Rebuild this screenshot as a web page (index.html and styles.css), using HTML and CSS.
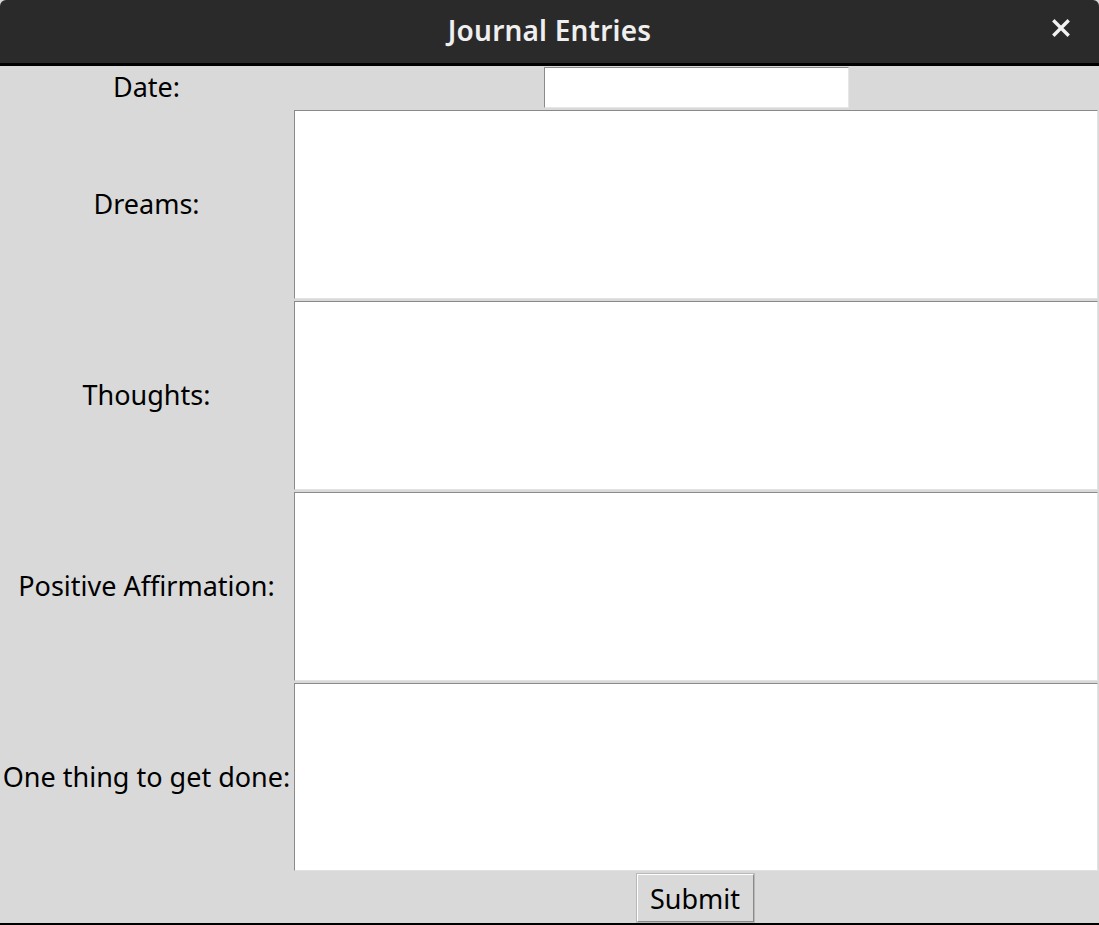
FILE: index.html
```html
<!DOCTYPE html>
<html lang="en">
<head>
<meta charset="utf-8">
<title>Journal Entries</title>
<link rel="stylesheet" href="styles.css">
</head>
<body>
<div class="window">
  <header class="titlebar">
    <span class="title">Journal Entries</span>
    <span class="close" aria-label="Close">
      <svg width="18" height="18" viewBox="0 0 18 18"><path d="M2.5 2.5 L15.5 15.5 M15.5 2.5 L2.5 15.5" stroke="#f2f2f2" stroke-width="3.4" stroke-linecap="square"/></svg>
    </span>
  </header>
  <main class="form">
    <div class="label row-date">Date:</div>
    <div class="cell-date"><input class="entry" type="text"></div>

    <div class="label">Dreams:</div>
    <div class="cell-text"><textarea class="text"></textarea></div>

    <div class="label">Thoughts:</div>
    <div class="cell-text"><textarea class="text"></textarea></div>

    <div class="label">Positive Affirmation:</div>
    <div class="cell-text"><textarea class="text"></textarea></div>

    <div class="label">One thing to get done:</div>
    <div class="cell-text"><textarea class="text"></textarea></div>

    <div class="spacer"></div>
    <div class="cell-submit"><button class="submit" type="button">Submit</button></div>
  </main>
</div>
</body>
</html>
```
FILE: styles.css
```css
html, body {
  margin: 0;
  padding: 0;
  background: #d9d9d9;
}

.window {
  width: 1099px;
  height: 925px;
  display: flex;
  flex-direction: column;
  background: #d9d9d9;
  border-bottom: 2px solid #000;
  box-sizing: border-box;
  font-family: "Noto Sans", "DejaVu Sans", sans-serif;
  overflow: hidden;
}

.titlebar {
  height: 66px;
  flex: 0 0 auto;
  background: #2a2a2a;
  border-bottom: 3px solid #000;
  box-sizing: border-box;
  display: flex;
  align-items: center;
  justify-content: center;
  position: relative;
  border-radius: 6px 6px 0 0;
}

.title {
  color: #efefef;
  font-family: "Noto Sans", sans-serif;
  font-weight: 600;
  font-size: 28px;
  letter-spacing: 0.2px;
  margin-top: -3px;
}

.close {
  position: absolute;
  left: 1052px;
  top: 19px;
  width: 18px;
  height: 18px;
  display: flex;
}

.form {
  flex: 1 1 auto;
  display: grid;
  grid-template-columns: 293px 1fr;
  grid-template-rows: 43px 191px 191px 191px 190px 1fr;
}

.label {
  display: flex;
  align-items: center;
  justify-content: center;
  font-size: 27px;
  color: #000;
  white-space: nowrap;
  padding-bottom: 2px;
}

.cell-date {
  display: flex;
  justify-content: center;
  align-items: flex-start;
  padding-top: 1px;
}

.entry {
  width: 305px;
  height: 41px;
  box-sizing: border-box;
  margin: 0;
  background: #fff;
  border: 1px solid;
  border-color: #8a8a8a #e6e6e6 #e6e6e6 #8a8a8a;
  outline: none;
  font-family: inherit;
  font-size: 22px;
  padding: 0 4px;
}

.cell-text {
  padding: 1px;
  display: flex;
}

.text {
  flex: 1 1 auto;
  resize: none;
  margin: 0;
  background: #fff;
  border: 1px solid;
  border-color: #8a8a8a #e2e2e2 #e2e2e2 #8a8a8a;
  outline: none;
  font-family: inherit;
  font-size: 22px;
  padding: 2px;
  box-sizing: border-box;
}

.spacer {
  grid-column: 1;
}

.cell-submit {
  display: flex;
  justify-content: center;
  align-items: flex-start;
  padding-top: 2px;
}

.submit {
  width: 117px;
  height: 48px;
  box-sizing: border-box;
  margin: 0 0 0 -2px;
  background: #d9d9d9;
  border: 1px solid;
  border-color: #ffffff #8a8a8a #8a8a8a #ffffff;
  box-shadow: 0 0 0 1px #b8b8b8;
  font-family: inherit;
  font-size: 27px;
  color: #000;
  padding: 0;
  line-height: 1;
}
```
